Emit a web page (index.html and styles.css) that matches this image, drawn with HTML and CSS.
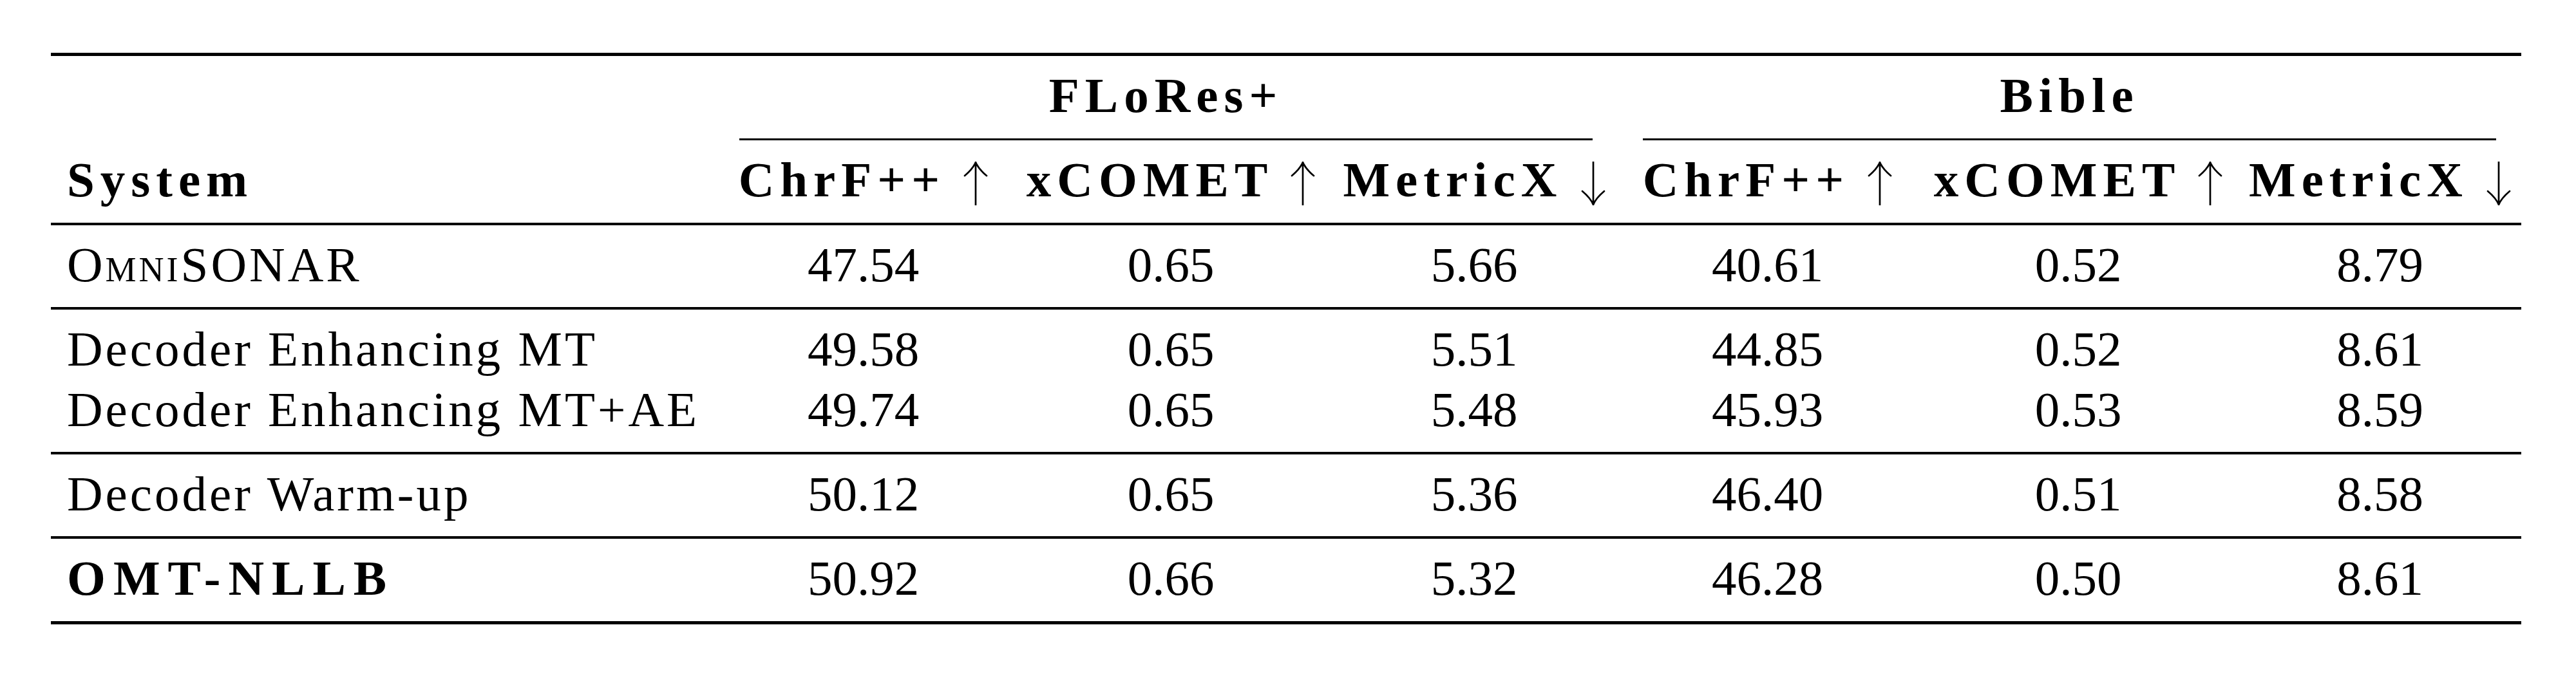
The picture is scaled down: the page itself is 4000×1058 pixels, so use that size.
FILE: index.html
```html
<!DOCTYPE html>
<html lang="en">
<head>
    <meta charset="UTF-8">
    <meta name="viewport" content="width=device-width, initial-scale=1.0">
    <title>OMT-NLLB results</title>
    <link rel="stylesheet" href="styles.css">
</head>
<body>
    <table class="results">
        <colgroup>
            <col class="col-system">
            <col class="col-chrf">
            <col class="col-comet">
            <col class="col-metricx">
            <col class="col-chrf-b">
            <col class="col-comet-b">
            <col class="col-metricx-b">
        </colgroup>
        <thead>
            <tr class="group-row">
                <th></th>
                <th colspan="3"><div class="group-label flores">FLoRes+</div></th>
                <th colspan="3"><div class="group-label bible">Bible</div></th>
            </tr>
            <tr class="metric-row">
                <th class="system">System</th>
                <th>ChrF++ <svg class="arrow" viewBox="0 0 38 68"><path d="M19 2V68M2 22Q15 11 19 1M36 22Q23 11 19 1"/></svg></th>
                <th>xCOMET <svg class="arrow" viewBox="0 0 38 68"><path d="M19 2V68M2 22Q15 11 19 1M36 22Q23 11 19 1"/></svg></th>
                <th>MetricX <svg class="arrow" viewBox="0 0 38 68"><path d="M19 0V66M2 46Q15 57 19 67M36 46Q23 57 19 67"/></svg></th>
                <th>ChrF++ <svg class="arrow" viewBox="0 0 38 68"><path d="M19 2V68M2 22Q15 11 19 1M36 22Q23 11 19 1"/></svg></th>
                <th>xCOMET <svg class="arrow" viewBox="0 0 38 68"><path d="M19 2V68M2 22Q15 11 19 1M36 22Q23 11 19 1"/></svg></th>
                <th>MetricX <svg class="arrow" viewBox="0 0 38 68"><path d="M19 0V66M2 46Q15 57 19 67M36 46Q23 57 19 67"/></svg></th>
            </tr>
        </thead>
        <tbody>
            <tr class="ruled">
                <td class="system">O<span class="sc">mni</span>SONAR</td>
                <td>47.54</td><td>0.65</td><td>5.66</td>
                <td>40.61</td><td>0.52</td><td>8.79</td>
            </tr>
            <tr class="group-first">
                <td class="system">Decoder Enhancing MT</td>
                <td>49.58</td><td>0.65</td><td>5.51</td>
                <td>44.85</td><td>0.52</td><td>8.61</td>
            </tr>
            <tr class="group-last ruled">
                <td class="system">Decoder Enhancing MT+AE</td>
                <td>49.74</td><td>0.65</td><td>5.48</td>
                <td>45.93</td><td>0.53</td><td>8.59</td>
            </tr>
            <tr class="ruled">
                <td class="system">Decoder Warm-up</td>
                <td>50.12</td><td>0.65</td><td>5.36</td>
                <td>46.40</td><td>0.51</td><td>8.58</td>
            </tr>
            <tr class="final">
                <td class="system best">OMT-NLLB</td>
                <td>50.92</td><td>0.66</td><td>5.32</td>
                <td>46.28</td><td>0.50</td><td>8.61</td>
            </tr>
        </tbody>
    </table>
</body>
</html>
```

FILE: styles.css
```css
body {
    margin: 0;
    background: #fff;
    color: #000;
    font-family: "Liberation Serif", "Times New Roman", serif;
}
.results {
    margin: 82px 0 0 79px;
    width: 3836px;
    table-layout: fixed;
    border-collapse: separate;
    border-spacing: 0;
    border-top: 5px solid #000;
    border-bottom: 5px solid #000;
    font-size: 77px;
    line-height: 92px;
}
.col-system { width: 1033px; }
.col-chrf { width: 457px; }
.col-comet { width: 498px; }
.col-metricx { width: 444px; }
.col-chrf-b { width: 467px; }
.col-comet-b { width: 498px; }
.col-metricx-b { width: 439px; }

th, td {
    padding: 15px 0 20px;
    text-align: center;
    white-space: nowrap;
    font-weight: normal;
}
th {
    font-weight: bold;
    letter-spacing: 9px;
}

/* group header with trimmed rule underneath */
.group-row th {
    padding: 15px 0 0;
}
.group-label {
    padding-bottom: 21px;
    border-bottom: 3px solid #000;
}
.flores { margin: 0 38px 0 36px; }
.bible { margin: 0 39px 0 40px; }

.metric-row th {
    padding-bottom: 21px;
    border-bottom: 4px solid #000;
}
.arrow {
    width: 38px;
    height: 68px;
    vertical-align: -14px;
    fill: none;
    stroke: #000;
    stroke-width: 2.7;
    stroke-linecap: round;
}

.system {
    text-align: left;
    padding-left: 25px;
}
td.system {
    letter-spacing: 4px;
}
.sc {
    font-variant: small-caps;
}
td.best {
    font-weight: bold;
    letter-spacing: 12px;
}

.ruled td {
    border-bottom: 4px solid #000;
}
.group-first td {
    padding-bottom: 0;
}
.group-last td {
    padding-top: 2px;
}
.final td {
    padding-bottom: 21px;
}
```
